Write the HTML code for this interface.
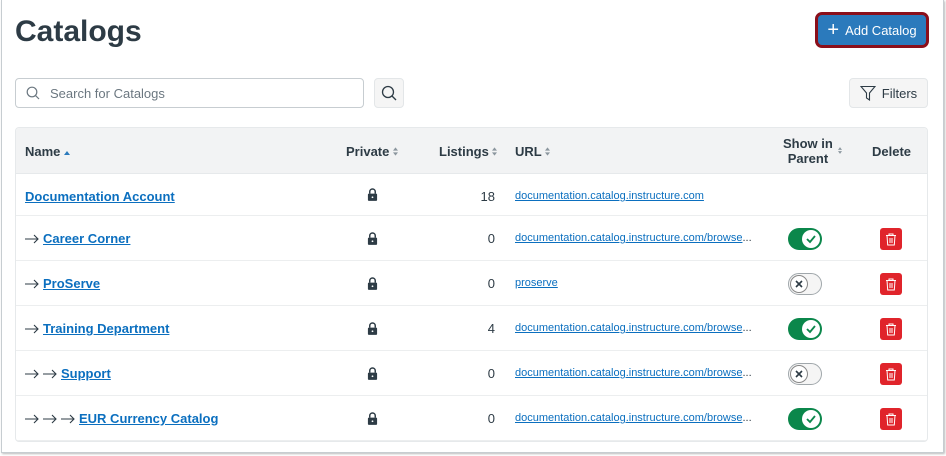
<!DOCTYPE html>
<html><head><meta charset="utf-8"><style>
*{box-sizing:border-box;margin:0;padding:0}
body{width:946px;height:456px;background:#fff;font-family:"Liberation Sans",sans-serif;color:#2d3b45;position:relative;overflow:hidden}
.frame{position:absolute;left:1px;top:0;width:943px;height:453px;border:1px solid #c7cdd1;border-top:none;box-shadow:1px 1px 2px #bbb}
h1{position:absolute;left:15px;top:15px;font-size:30px;font-weight:bold;color:#2d3b45}
.add{position:absolute;left:815px;top:12px;width:114px;height:36px;border:3px solid #8b0f1a;border-radius:7px;background:#2b7abc;color:#fff;font-size:13px;display:flex;align-items:center;justify-content:center;gap:6px}
.search{position:absolute;left:15px;top:78px;width:349px;height:30px;border:1px solid #c7cdd1;border-radius:4px;font-size:13px;color:#6b7780;display:flex;align-items:center;padding-left:10px;gap:10px}
.sbtn{position:absolute;left:374px;top:78px;width:30px;height:30px;background:#f5f5f5;border:1px solid #e3e6e8;border-radius:4px;display:flex;align-items:center;justify-content:center}
.filt{position:absolute;left:849px;top:78px;width:79px;height:30px;background:#f5f5f5;border:1px solid #e3e6e8;border-radius:4px;font-size:13px;display:flex;align-items:center;justify-content:center;gap:6px}
.tbl{position:absolute;left:15px;top:127px;width:913px;height:315px;border:1px solid #e6e9eb;border-radius:4px;overflow:hidden}
.hd{position:absolute;left:0;top:0;width:100%;height:46px;background:#f2f3f4;border-bottom:1px solid #e6e9eb;font-size:13px;font-weight:bold}
.hd>span{position:absolute}
.row{position:absolute;left:0;width:100%;height:45px;border-bottom:1px solid #eceeef;font-size:13px}
.row>*{position:absolute}
a{color:#0b6fbf;text-decoration:underline}
.nm{left:9px;top:15px;display:flex;align-items:center;gap:4px}
.nm a{font-weight:bold}
.lk{left:351px;top:14px}
.ls{right:432px;top:15px}
.url{left:499px;top:16px;font-size:11px}
.tg{left:772px;top:12px;width:34px;height:22px;border-radius:11px}
.on{background:#0b874b}
.off{background:#f5f5f5;border:1px solid #a0a7ab}
.kn{position:absolute;top:2px;width:18px;height:18px;border-radius:50%;background:#fff;display:flex;align-items:center;justify-content:center}
.on .kn{right:2px}.off .kn{left:1px;top:1px;border:1px solid #888}
.del{left:864px;top:12px;width:22px;height:22px;background:#e0242b;border-radius:3px;display:flex;align-items:center;justify-content:center}
.ar{width:14px;height:10px}
</style></head><body>
<svg width="0" height="0" style="position:absolute"><defs>
<symbol id="lock" viewBox="0 0 12 14"><path d="M3 6V4a3 3 0 0 1 6 0v2" fill="none" stroke="#2d3b45" stroke-width="1.6"/><rect x="1" y="6" width="10" height="8" rx="1" fill="#2d3b45"/><circle cx="6" cy="10" r="1" fill="#fff"/></symbol>
<symbol id="arr" viewBox="0 0 14 10"><path d="M0 5H13M9 1L13 5L9 9" fill="none" stroke="#2d3b45" stroke-width="1.1"/></symbol>
<symbol id="srt" viewBox="0 0 6 10"><path d="M0 4L3 0L6 4ZM0 6L3 10L6 6Z" fill="#8b969e"/></symbol>
</defs></svg>
<div class="frame"></div>
<h1>Catalogs</h1>
<div class="add"><span style="font-size:20px;line-height:1">+</span>Add Catalog</div>
<div class="search"><svg width="14" height="14" viewBox="0 0 14 14"><circle cx="6" cy="6" r="4.8" fill="none" stroke="#6b7780" stroke-width="1.2"/><path d="M9.5 9.5L13 13" stroke="#6b7780" stroke-width="1.2"/></svg>Search for Catalogs</div>
<div class="sbtn"><svg width="16" height="16" viewBox="0 0 16 16"><circle cx="7" cy="7" r="5.5" fill="none" stroke="#2d3b45" stroke-width="1.3"/><path d="M11 11L15 15" stroke="#2d3b45" stroke-width="1.3"/></svg></div>
<div class="filt"><svg width="16" height="16" viewBox="0 0 16 16"><path d="M1 1.5H15L9.5 8V15L6.5 13V8Z" fill="none" stroke="#2d3b45" stroke-width="1.1"/></svg>Filters</div>
<div class="tbl">
<div class="hd">
<span style="left:9px;top:16px">Name <svg width="6" height="6" viewBox="0 0 6 4"><path d="M0 4L3 0L6 4Z" fill="#2b7abc"/></svg></span>
<span style="left:330px;top:16px">Private <svg width="5" height="9"><use href="#srt"/></svg></span>
<span style="left:423px;top:16px">Listings <svg width="5" height="9"><use href="#srt"/></svg></span>
<span style="left:499px;top:16px">URL <svg width="5" height="9"><use href="#srt"/></svg></span>
<span style="left:767px;top:8px;text-align:center;line-height:15px">Show in<br>Parent</span><svg style="position:absolute;left:822px;top:19px" width="4" height="7"><use href="#srt"/></svg>
<span style="left:856px;top:16px">Delete</span>
</div>
<div class="row" style="top:46px;height:42px"><div class="nm"><a>Documentation Account</a></div><svg class="lk" width="11" height="13"><use href="#lock"/></svg><div class="ls">18</div><div class="url"><a>documentation.catalog.instructure.com</a></div></div>
<div class="row" style="top:88px"><div class="nm"><svg class="ar"><use href="#arr"/></svg><a>Career Corner</a></div><svg class="lk" width="11" height="13" style="top:16px"><use href="#lock"/></svg><div class="ls">0</div><div class="url"><a>documentation.catalog.instructure.com/browse</a>...</div><div class="tg on"><div class="kn"><svg width="12" height="12"><path d="M2 6L5 9L10 3" fill="none" stroke="#0b874b" stroke-width="1.8"/></svg></div></div><div class="del"><svg width="12" height="13"><path d="M1 2.5H11M4 2.5V1H8V2.5M2 2.5L2.7 12H9.3L10 2.5M5 5V10M7 5V10" fill="none" stroke="#fff" stroke-width="1"/></svg></div></div>
<div class="row" style="top:133px"><div class="nm"><svg class="ar"><use href="#arr"/></svg><a>ProServe</a></div><svg class="lk" width="11" height="13" style="top:16px"><use href="#lock"/></svg><div class="ls">0</div><div class="url"><a>proserve</a></div><div class="tg off"><div class="kn"><svg width="10" height="10"><path d="M2 2L8 8M8 2L2 8" stroke="#2d3b45" stroke-width="1.6"/></svg></div></div><div class="del"><svg width="12" height="13"><path d="M1 2.5H11M4 2.5V1H8V2.5M2 2.5L2.7 12H9.3L10 2.5M5 5V10M7 5V10" fill="none" stroke="#fff" stroke-width="1"/></svg></div></div>
<div class="row" style="top:178px"><div class="nm"><svg class="ar"><use href="#arr"/></svg><a>Training Department</a></div><svg class="lk" width="11" height="13" style="top:16px"><use href="#lock"/></svg><div class="ls">4</div><div class="url"><a>documentation.catalog.instructure.com/browse</a>...</div><div class="tg on"><div class="kn"><svg width="12" height="12"><path d="M2 6L5 9L10 3" fill="none" stroke="#0b874b" stroke-width="1.8"/></svg></div></div><div class="del"><svg width="12" height="13"><path d="M1 2.5H11M4 2.5V1H8V2.5M2 2.5L2.7 12H9.3L10 2.5M5 5V10M7 5V10" fill="none" stroke="#fff" stroke-width="1"/></svg></div></div>
<div class="row" style="top:223px"><div class="nm"><svg class="ar"><use href="#arr"/></svg><svg class="ar"><use href="#arr"/></svg><a>Support</a></div><svg class="lk" width="11" height="13" style="top:16px"><use href="#lock"/></svg><div class="ls">0</div><div class="url"><a>documentation.catalog.instructure.com/browse</a>...</div><div class="tg off"><div class="kn"><svg width="10" height="10"><path d="M2 2L8 8M8 2L2 8" stroke="#2d3b45" stroke-width="1.6"/></svg></div></div><div class="del"><svg width="12" height="13"><path d="M1 2.5H11M4 2.5V1H8V2.5M2 2.5L2.7 12H9.3L10 2.5M5 5V10M7 5V10" fill="none" stroke="#fff" stroke-width="1"/></svg></div></div>
<div class="row" style="top:268px"><div class="nm"><svg class="ar"><use href="#arr"/></svg><svg class="ar"><use href="#arr"/></svg><svg class="ar"><use href="#arr"/></svg><a>EUR Currency Catalog</a></div><svg class="lk" width="11" height="13" style="top:16px"><use href="#lock"/></svg><div class="ls">0</div><div class="url"><a>documentation.catalog.instructure.com/browse</a>...</div><div class="tg on"><div class="kn"><svg width="12" height="12"><path d="M2 6L5 9L10 3" fill="none" stroke="#0b874b" stroke-width="1.8"/></svg></div></div><div class="del"><svg width="12" height="13"><path d="M1 2.5H11M4 2.5V1H8V2.5M2 2.5L2.7 12H9.3L10 2.5M5 5V10M7 5V10" fill="none" stroke="#fff" stroke-width="1"/></svg></div></div>
</div>
</body></html>
